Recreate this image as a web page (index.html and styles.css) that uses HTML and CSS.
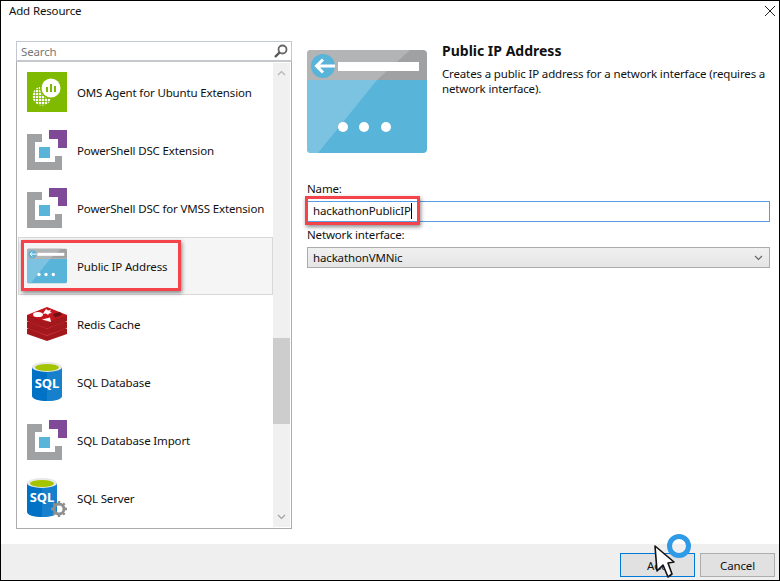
FILE: index.html
```html
<!DOCTYPE html>
<html lang="en">
<head>
<meta charset="UTF-8">
<title>Add Resource</title>
<link rel="stylesheet" href="styles.css">
</head>
<body>
<svg class="defs" width="0" height="0">
  <defs>
    <pattern id="oms-dots" width="3" height="3" patternUnits="userSpaceOnUse">
      <rect width="2.2" height="2.2" fill="#fff"/>
    </pattern>
    <symbol id="ico-dsc" viewBox="0 0 40 40">
      <path fill="#804998" d="M22 0H40V18H31V9H22Z"/>
      <path fill="#a0a1a2" d="M0 4H15V12H8V32H28V26H35V40H0Z"/>
      <rect fill="#59b4d9" x="12" y="17" width="11" height="11"/>
    </symbol>
    <symbol id="ico-ip" viewBox="0 0 120 103">
      <path fill="#59b4d9" d="M0 30H120V99a4 4 0 0 1-4 4H4a4 4 0 0 1-4-4Z"/>
      <path fill="#7cc3e1" d="M0 30H70L11 103H4a4 4 0 0 1-4-4Z"/>
      <path fill="#a0a1a2" d="M4 0H116a4 4 0 0 1 4 4V30H0V4a4 4 0 0 1 4-4Z"/>
      <path fill="#b3b4b5" d="M4 0H103L70 30H0V4a4 4 0 0 1 4-4Z"/>
      <circle fill="#59b4d9" cx="16" cy="16" r="12"/>
      <path fill="none" stroke="#fff" stroke-width="3" d="M10 16H28M16 9.5L9.5 16L16 22.5"/>
      <rect fill="#fff" x="31" y="12" width="81" height="9"/>
      <circle fill="#fff" cx="36" cy="77" r="5"/>
      <circle fill="#fff" cx="57" cy="77" r="5"/>
      <circle fill="#fff" cx="79" cy="77" r="5"/>
    </symbol>
    <symbol id="ico-db" viewBox="0 0 30 39">
      <path fill="#0072c6" d="M0 5V34C0 37 7 39 15 39S30 37 30 34V5Z"/>
      <path fill="#2c8dd3" d="M15 5H30V34C30 37 23 39 15 39Z" opacity=".5"/>
      <ellipse fill="#e8e8e8" cx="15" cy="5" rx="15" ry="5"/>
      <ellipse fill="#a4c400" cx="15" cy="5.5" rx="12" ry="3.5"/>
    </symbol>
  </defs>
</svg>

<div class="dialog">
  <div class="titlebar">
    <span>Add Resource</span>
    <svg class="close" width="10" height="10" viewBox="0 0 10 10"><path d="M0 0L10 10M10 0L0 10" stroke="#222" fill="none"/></svg>
  </div>

  <div class="main">
    <div class="picker">
      <div class="search">
        <input type="text" placeholder="Search">
        <svg width="14" height="14" viewBox="0 0 14 14"><circle cx="8.5" cy="5.5" r="4" fill="none" stroke="#666" stroke-width="1.8"/><path d="M5.5 8.5L1 13" stroke="#555" stroke-width="2.4"/></svg>
      </div>
      <div class="list">
        <ul class="items">
          <li class="item">
            <svg class="icon" viewBox="0 0 40 40">
              <rect width="40" height="40" fill="#7fba00"/>
              <circle cx="15" cy="24" r="9.5" fill="url(#oms-dots)"/>
              <circle cx="24" cy="16" r="11" fill="#7fba00"/>
              <circle cx="24" cy="16" r="9.5" fill="#fff"/>
              <path d="M19 15h2v5h-2zM23 12h2v8h-2zM27 14h2v6h-2z" fill="#7fba00"/>
            </svg>
            <span>OMS Agent for Ubuntu Extension</span>
          </li>
          <li class="item">
            <svg class="icon"><use href="#ico-dsc"/></svg>
            <span>PowerShell DSC Extension</span>
          </li>
          <li class="item">
            <svg class="icon"><use href="#ico-dsc"/></svg>
            <span>PowerShell DSC for VMSS Extension</span>
          </li>
          <li class="item selected">
            <svg class="icon"><use href="#ico-ip"/></svg>
            <span>Public IP Address</span>
          </li>
          <li class="item">
            <svg class="icon" viewBox="0 0 40 40">
              <path fill="#a3181d" d="M0 25L20 17L40 25V30L20 37L0 30Z"/>
              <path fill="#d0363b" d="M0 24L20 16L40 24L20 32Z"/>
              <path fill="#a3181d" d="M0 18L20 10L40 18V24L20 31L0 24Z"/>
              <path fill="#d0363b" d="M0 17L20 9L40 17L20 25Z"/>
              <path fill="#a3181d" d="M0 11V17L20 24.5L40 17V11Z"/>
              <path fill="#c4161c" d="M0 11L20 3L40 11L20 18.5Z"/>
              <ellipse fill="#fff" cx="11" cy="10.5" rx="5" ry="2.6"/>
              <path fill="#fff" d="M19 5l2 1.5 3-.5-1 2 2 1-3 .5-1 1.5-2-1.5-3 .5 1-2zM15 15.5l8-2 1 4.5z"/>
              <path fill="#6a1216" d="M26 10l7-2 2 3-7 2.5z"/>
            </svg>
            <span>Redis Cache</span>
          </li>
          <li class="item">
            <div class="db">
              <svg class="db-shape"><use href="#ico-db"/></svg>
              <span class="db-text">SQL</span>
            </div>
            <span>SQL Database</span>
          </li>
          <li class="item">
            <svg class="icon"><use href="#ico-dsc"/></svg>
            <span>SQL Database Import</span>
          </li>
          <li class="item">
            <div class="db server">
              <svg class="db-shape"><use href="#ico-db"/></svg>
              <span class="db-text">SQL</span>
              <svg class="gear" viewBox="0 0 16 16"><circle cx="8" cy="8" r="5" fill="none" stroke="#8f8f8f" stroke-width="3"/><path d="M8 0V3M8 13V16M0 8H3M13 8H16M2.3 2.3L4.5 4.5M11.5 11.5L13.7 13.7M13.7 2.3L11.5 4.5M4.5 11.5L2.3 13.7" stroke="#8f8f8f" stroke-width="2.4"/></svg>
            </div>
            <span>SQL Server</span>
          </li>
        </ul>
        <div class="scrollbar">
          <svg width="9" height="6" viewBox="0 0 9 6"><path d="M1 5L4.5 1.5L8 5" fill="none" stroke="#b5b5b5" stroke-width="1.2"/></svg>
          <div class="track"><div class="thumb"></div></div>
          <svg width="9" height="6" viewBox="0 0 9 6"><path d="M1 1L4.5 4.5L8 1" fill="none" stroke="#a0a0a0" stroke-width="1.2"/></svg>
        </div>
      </div>
    </div>

    <div class="details">
      <div class="summary">
        <svg class="hero"><use href="#ico-ip"/></svg>
        <div class="about">
          <h1>Public IP Address</h1>
          <p>Creates a public IP address for a network interface (requires a network interface).</p>
        </div>
      </div>
      <label class="name-label">Name:</label>
      <div class="field"><span class="caret">hackathonPublicIP</span></div>
      <label class="nic-label">Network interface:</label>
      <div class="combo">
        <span>hackathonVMNic</span>
        <svg width="9" height="6" viewBox="0 0 9 6"><path d="M1 1L4.5 4.5L8 1" fill="none" stroke="#666" stroke-width="1.2"/></svg>
      </div>
    </div>
  </div>

  <div class="footer">
    <button class="btn primary">Add</button>
    <button class="btn">Cancel</button>
  </div>

  <!-- annotations drawn over the dialog -->
  <div class="callout callout-item"></div>
  <div class="callout callout-name"></div>
  <svg class="pointer" width="40" height="50" viewBox="0 0 40 50">
    <circle cx="25" cy="12" r="9.5" fill="none" stroke="#2f9ae6" stroke-width="5"/>
    <path d="M1 12L3 37L9 31L14 43L18 40L14 29L20 28Z" fill="#fff" stroke="#111" stroke-width="1.6" stroke-linejoin="round"/>
  </svg>
</div>
</body>
</html>
```

FILE: styles.css
```css
* {
    box-sizing: border-box;
}

body {
    margin: 0;
    font-family: "Noto Sans", sans-serif;
    font-size: 11.5px;
    letter-spacing: -0.15px;
    color: #111;
    background-color: #fff;
}

.defs {
    position: absolute;
}

.dialog {
    position: relative;
    display: flex;
    flex-direction: column;
    width: 780px;
    height: 581px;
    border: 1px solid #000;
    overflow: hidden;
}

.titlebar {
    display: flex;
    justify-content: space-between;
    height: 40px;
    padding: 2px 4px 0 8px;
    line-height: 16px;
}

.close {
    margin-top: 3px;
}

.main {
    display: flex;
    flex: 1;
    padding-left: 15px;
}

/* Left side: search and resource list */
.picker {
    display: flex;
    flex-direction: column;
    width: 276px;
    height: 488px;
}

.search {
    display: flex;
    align-items: center;
    height: 21px;
    padding-right: 3px;
    border: 1px solid #c4c8d4;
}

.search input {
    flex: 1;
    min-width: 0;
    padding: 0 4px;
    border: none;
    outline: none;
    font: inherit;
    letter-spacing: inherit;
}

.search input::placeholder {
    color: #777;
}

.list {
    display: flex;
    flex: 1;
    padding: 1px;
    border: 1px solid #acacac;
    border-top-color: #c8c8c8;
}

.items {
    flex: 1;
    min-width: 0;
    margin: 0;
    padding: 0;
    list-style: none;
}

.item {
    display: flex;
    align-items: center;
    gap: 10px;
    height: 58px;
    padding-left: 9px;
}

.item.selected {
    background-color: #f5f5f5;
    border: 1px solid #d8d8d8;
    padding-left: 8px;
}

.icon {
    flex: none;
    width: 40px;
    height: 40px;
}

.db {
    position: relative;
    flex: none;
    width: 40px;
    height: 40px;
}

.db-shape {
    display: block;
    width: 30px;
    height: 39px;
    margin-left: 5px;
}

.db-text {
    position: absolute;
    left: 5px;
    top: 12px;
    width: 30px;
    text-align: center;
    font-size: 13px;
    font-weight: bold;
    letter-spacing: 0;
    color: #fff;
}

.server .db-shape {
    margin-left: 0;
}

.server .db-text {
    left: 0;
    top: 10px;
}

.gear {
    position: absolute;
    left: 24px;
    top: 23px;
    width: 16px;
    height: 16px;
}

.scrollbar {
    display: flex;
    flex-direction: column;
    align-items: center;
    justify-content: space-between;
    flex: none;
    width: 17px;
    padding: 7px 0;
    background-color: #f0f0f0;
    position: relative;
}

.track {
    position: absolute;
    top: 275px;
    left: 0;
    width: 17px;
}

.thumb {
    height: 86px;
    background-color: #cdcdcd;
}

/* Right side: description and form */
.details {
    flex: 1;
    margin-left: 15px;
    margin-right: 9px;
}

.summary {
    display: flex;
    gap: 15px;
    height: 112px;
}

.hero {
    flex: none;
    width: 120px;
    height: 103px;
    margin-top: 9px;
}

h1 {
    margin: 0 0 5px;
    font-size: 14px;
    font-weight: bold;
    letter-spacing: 0;
    line-height: 20px;
}

p {
    margin: 0;
    line-height: 15px;
}

label {
    display: block;
    line-height: 16px;
}

.name-label {
    margin-top: 28px;
    margin-bottom: 4px;
}

.field {
    height: 21px;
    padding-left: 5px;
    border: 1px solid #569de5;
    line-height: 18px;
}

.caret {
    display: inline-block;
    height: 16px;
    line-height: 16px;
    border-right: 1px solid #000;
}

.nic-label {
    margin-top: 5px;
    margin-bottom: 4px;
}

.combo {
    display: flex;
    align-items: center;
    justify-content: space-between;
    height: 21px;
    padding: 0 6px 0 5px;
    border: 1px solid #acacac;
    background: linear-gradient(#f0f0f0, #e5e5e5);
}

.footer {
    display: flex;
    justify-content: flex-end;
    gap: 5px;
    height: 36px;
    padding: 9px 4px 0 0;
    background-color: #efefef;
}

.btn {
    width: 75px;
    height: 24px;
    padding: 0;
    border: 1px solid #adadad;
    background-color: #e1e1e1;
    font: inherit;
    letter-spacing: inherit;
    color: #111;
}

.btn.primary {
    border: 1px solid #0078d7;
}

.callout {
    position: absolute;
    border: 3px solid #f4434a;
    box-shadow: 1px 2px 4px rgba(0, 0, 0, 0.45);
}

.callout-item {
    left: 20px;
    top: 239px;
    width: 160px;
    height: 51px;
}

.callout-name {
    left: 304px;
    top: 195px;
    width: 115px;
    height: 29px;
}

.pointer {
    position: absolute;
    left: 653px;
    top: 533px;
}
```
